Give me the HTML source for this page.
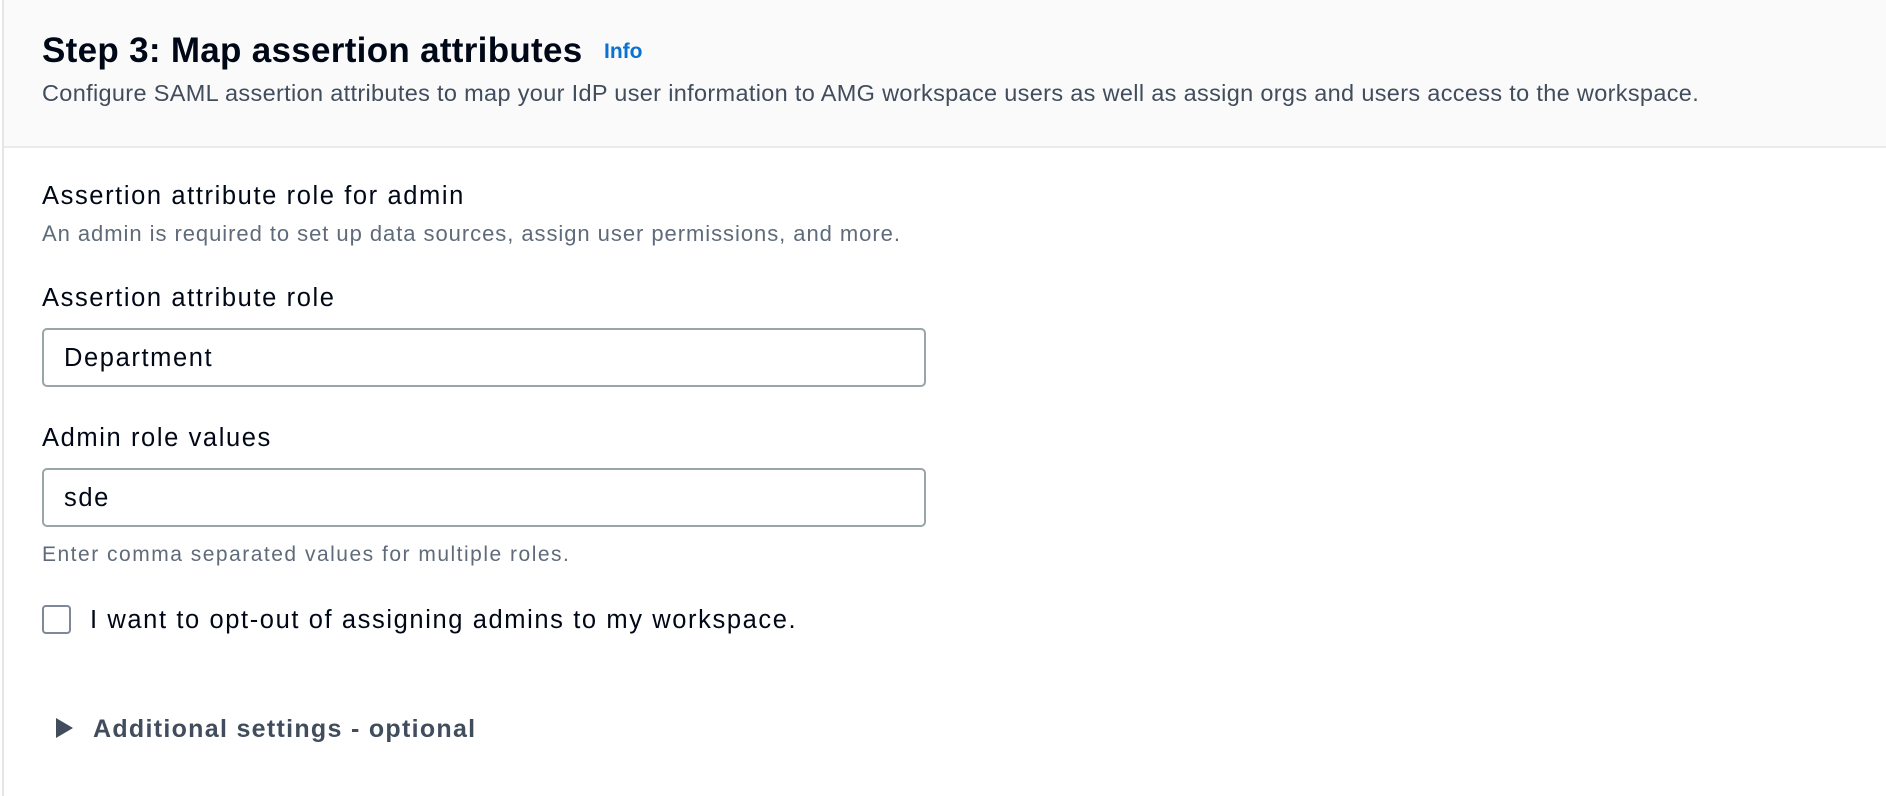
<!DOCTYPE html>
<html><head><meta charset="utf-8"><style>
html,body{margin:0;padding:0;width:1886px;height:796px;overflow:hidden;background:#fff;font-family:"Liberation Sans",Arial,sans-serif;}
.abs{position:absolute;white-space:nowrap;}
#lb{position:absolute;left:2px;top:0;width:2px;height:796px;background:#e3e5e7;}
#hdr{position:absolute;left:4px;top:0;width:1882px;height:146px;background:#fafafa;border-bottom:2px solid #e9ebed;}
.t{color:#000716;}
.g{color:#5f6b7a;}
.lbl{font-size:25.5px;letter-spacing:1.6px;}
.box{position:absolute;left:42px;width:880px;border:2px solid #9aa5a8;border-radius:5px;background:#fff;}
</style></head><body>
<div id="hdr"></div><div id="lb"></div>
<div class="abs t" style="left:42px;top:31px;font-size:35px;font-weight:bold;letter-spacing:0.3px;">Step 3: Map assertion attributes</div>
<div class="abs" style="left:604px;top:40px;font-size:21px;font-weight:bold;color:#0972d3;">Info</div>
<div class="abs g" style="left:42px;top:80px;font-size:23.5px;letter-spacing:0.33px;color:#414d5c;">Configure SAML assertion attributes to map your IdP user information to AMG workspace users as well as assign orgs and users access to the workspace.</div>
<div class="abs t lbl" style="left:42px;top:182px;">Assertion attribute role for admin</div>
<div class="abs g" style="left:42px;top:221px;font-size:22px;letter-spacing:0.95px;">An admin is required to set up data sources, assign user permissions, and more.</div>
<div class="abs t lbl" style="left:42px;top:284px;">Assertion attribute role</div>
<div class="box" style="top:328px;height:55px;"></div>
<div class="abs t lbl" style="left:64px;top:344px;">Department</div>
<div class="abs t lbl" style="left:42px;top:424px;">Admin role values</div>
<div class="box" style="top:468px;height:55px;"></div>
<div class="abs t lbl" style="left:64px;top:484px;">sde</div>
<div class="abs g" style="left:42px;top:543px;font-size:21px;letter-spacing:1.5px;">Enter comma separated values for multiple roles.</div>
<div class="abs" style="left:42px;top:605px;width:25px;height:25px;border:2px solid #7d8998;border-radius:4px;"></div>
<div class="abs t" style="left:90px;top:606px;font-size:25.5px;letter-spacing:1.6px;">I want to opt-out of assigning admins to my workspace.</div>
<svg class="abs" style="left:55px;top:717px;" width="19" height="22"><polygon points="1,1 18,11 1,21" fill="#414d5c"/></svg>
<div class="abs" style="left:93px;top:715px;font-size:25px;font-weight:bold;letter-spacing:1.3px;color:#414d5c;">Additional settings - optional</div>
</body></html>
